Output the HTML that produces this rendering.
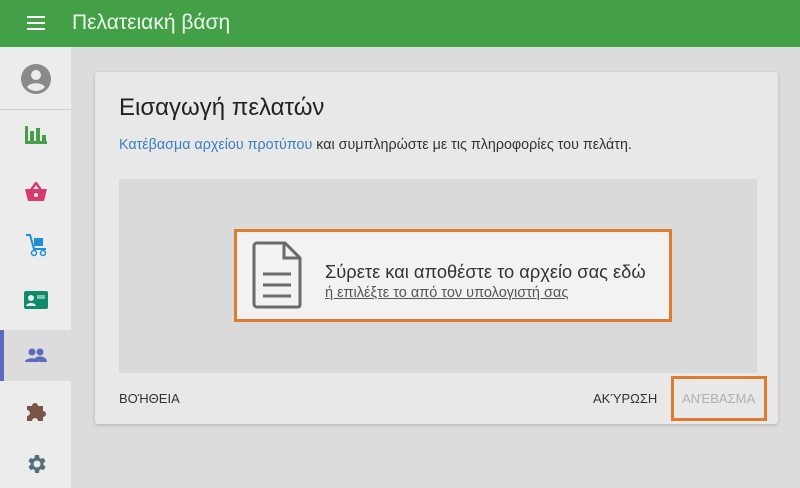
<!DOCTYPE html>
<html><head><meta charset="utf-8"><style>
*{margin:0;padding:0;box-sizing:border-box}
body{width:800px;height:488px;overflow:hidden;background:#dcdcdc;font-family:"Liberation Sans",sans-serif;position:relative}
.hdr{position:absolute;left:0;top:0;width:800px;height:47px;background:#43a047;color:#eef7ee}
.hdr .t{position:absolute;left:72px;top:11px;font-size:21px}
.side{position:absolute;left:0;top:47px;width:71px;height:441px;background:#ececec}
.ic{position:absolute;left:0;width:71px;display:flex;justify-content:center;align-items:center}
.card{position:absolute;left:95px;top:72px;width:683px;height:352px;background:#e8e8e8;border-radius:3px;box-shadow:0 1px 3px rgba(0,0,0,.2)}
.drop{position:absolute;left:119px;top:179px;width:638px;height:194px;background:#dadada}
.box{position:absolute;left:234px;top:229px;width:438px;height:93px;border:3px solid #e07a2f;background:#f2f2f2}
.btn{position:absolute;font-size:13px;color:#333;top:391px}
</style></head><body>
<div class="hdr">
<svg style="position:absolute;left:27px;top:16px" width="18" height="14"><rect y="0" width="18" height="2" fill="#fff"/><rect y="6" width="18" height="2" fill="#fff"/><rect y="12" width="18" height="2" fill="#fff"/></svg>
<div class="t">Πελατειακή βάση</div></div>
<div class="side">
<div style="position:absolute;left:0;top:62px;width:71px;height:1px;background:#d0d0d0"></div>
<div class="ic" style="top:17px;height:30px"><svg width="30" height="30" viewBox="0 0 30 30"><circle cx="15" cy="15" r="15" fill="#8a8a8a"/><circle cx="15" cy="11" r="5" fill="#ececec"/><path d="M6 23c3-5 15-5 18 0c-3 3-6 4-9 4s-6-1-9-4z" fill="#ececec"/></svg></div>
<div class="ic" style="top:78px;height:20px"><svg width="22" height="18"><rect x="0" y="0" width="3" height="18" fill="#43a047"/><rect x="0" y="15" width="22" height="3" fill="#43a047"/><rect x="5" y="5" width="4" height="11" fill="#43a047"/><rect x="11" y="2" width="4" height="14" fill="#43a047"/><rect x="17" y="9" width="4" height="7" fill="#43a047"/></svg></div>
<div class="ic" style="top:134px;height:22px"><svg width="22" height="20"><path d="M6 8L11 1L16 8" stroke="#d63a6e" stroke-width="2.5" fill="none"/><path d="M0 7h22l-3 12H3z" fill="#d63a6e"/><circle cx="11" cy="13" r="2" fill="#ececec"/></svg></div>
<div class="ic" style="top:186px;height:24px"><svg width="24" height="24"><path d="M2 2h4l4 14h12" stroke="#1e8fd6" stroke-width="2" fill="none"/><rect x="10" y="5" width="9" height="8" fill="#1e8fd6"/><circle cx="10" cy="20" r="2.5" fill="none" stroke="#1e8fd6" stroke-width="1.5"/><circle cx="19" cy="20" r="2.5" fill="none" stroke="#1e8fd6" stroke-width="1.5"/></svg></div>
<div class="ic" style="top:243px;height:20px"><svg width="24" height="18"><rect width="24" height="18" rx="2" fill="#0f8a6a"/><circle cx="7" cy="7" r="3" fill="#ececec"/><path d="M2 15c1-4 9-4 10 0z" fill="#ececec"/><rect x="13" y="4" width="8" height="4" fill="#7fc4b0"/></svg></div>
<div style="position:absolute;left:0;top:283px;width:71px;height:51px;background:#dcdcdc"></div>
<div style="position:absolute;left:0;top:283px;width:4px;height:51px;background:#5c6bc0"></div>
<div class="ic" style="top:300px;height:16px"><svg width="22" height="14"><circle cx="7" cy="4" r="3.5" fill="#5c6bc0"/><circle cx="15" cy="4" r="3.5" fill="#5c6bc0"/><path d="M0 14c0-5 14-5 14 0z" fill="#5c6bc0"/><path d="M10 10c3-3 12-2 12 4h-7z" fill="#5c6bc0"/></svg></div>
<div class="ic" style="top:353px;height:22px"><svg width="22" height="22" viewBox="0 0 22 22"><path d="M2 6h5a3 3 0 1 1 6 0h5v5a3 3 0 1 1 0 6v4h-5a3 3 0 1 0-6 0H2v-5a3 3 0 1 0 0-6z" fill="#795548"/></svg></div>
<div class="ic" style="top:405px;height:24px"><svg width="24" height="24" viewBox="0 0 24 24"><path fill="#546e7a" d="M19.4 13a7.5 7.5 0 0 0 0-2l2.1-1.6-2-3.5-2.5 1a7.3 7.3 0 0 0-1.7-1L15 3h-4l-.4 2.9a7.3 7.3 0 0 0-1.7 1l-2.5-1-2 3.5L6.6 11a7.5 7.5 0 0 0 0 2l-2.1 1.6 2 3.5 2.5-1a7.3 7.3 0 0 0 1.7 1L11 21h4l.4-2.9a7.3 7.3 0 0 0 1.7-1l2.5 1 2-3.5zM13 15.5A3.5 3.5 0 1 1 13 8.5a3.5 3.5 0 0 1 0 7z"/></svg></div>
</div>
<div class="card">
<div style="position:absolute;left:24px;top:22px;font-size:24px;color:#222;white-space:nowrap">Εισαγωγή πελατών</div>
<div style="position:absolute;left:24px;top:65px;font-size:14.3px;color:#333;white-space:nowrap"><span style="color:#3a7fc0">Κατέβασμα αρχείου προτύπου</span> και συμπληρώστε με τις πληροφορίες του πελάτη.</div>
</div>
<div class="drop"></div>
<div class="box">
<svg style="position:absolute;left:15px;top:9px" width="50" height="68" viewBox="0 0 50 68"><path d="M5 2h28l15 15v47a2 2 0 0 1-2 2H5a3 3 0 0 1-3-3V5a3 3 0 0 1 3-3z" fill="none" stroke="#6a6a6a" stroke-width="3"/><path d="M32 2v15h16" fill="none" stroke="#6a6a6a" stroke-width="3"/><path d="M11 33h28M11 44h28M11 55h28" stroke="#6a6a6a" stroke-width="3"/></svg>
<div style="position:absolute;left:88px;top:29px;font-size:18.3px;color:#333;white-space:nowrap">Σύρετε και αποθέστε το αρχείο σας εδώ</div>
<div style="position:absolute;left:88px;top:53px;font-size:14.5px;color:#555;text-decoration:underline;white-space:nowrap">ή επιλέξτε το από τον υπολογιστή σας</div>
</div>
<div class="btn" style="left:119px">ΒΟΉΘΕΙΑ</div>
<div class="btn" style="left:593px">ΑΚΎΡΩΣΗ</div>
<div style="position:absolute;left:671px;top:376px;width:96px;height:45px;border:3px solid #e07a2f;background:#e8e8e8"></div>
<div class="btn" style="left:682px;color:#b0b0b0">ΑΝΈΒΑΣΜΑ</div>
</body></html>
